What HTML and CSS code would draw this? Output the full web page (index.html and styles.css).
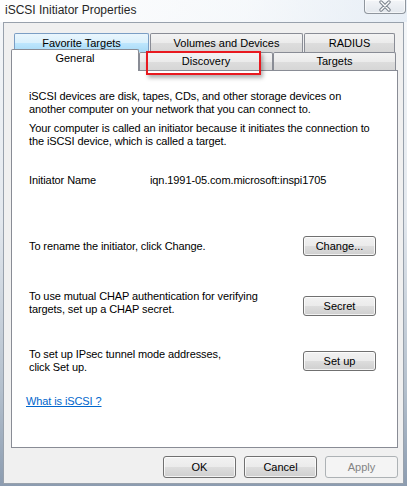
FILE: index.html
```html
<!DOCTYPE html>
<html>
<head>
<meta charset="utf-8">
<link rel="stylesheet" href="styles.css">
</head>
<body>
<div class="window">
  <div class="titlebar">
    <span class="title">iSCSI Initiator Properties</span>
    <div class="close">
      <svg width="18" height="12" viewBox="0 0 18 12">
        <path d="M5 2 L13 10 M13 2 L5 10" stroke="#7a828c" stroke-width="3.4" stroke-linecap="round" fill="none"/>
        <path d="M5 2 L13 10 M13 2 L5 10" stroke="#ffffff" stroke-width="1.4" stroke-linecap="round" fill="none"/>
      </svg>
    </div>
  </div>
  <div class="client">
    <div class="tabs">
      <div class="tabrow back">
        <div class="tab hover w-fav">Favorite Targets</div>
        <div class="tab w-vol">Volumes and Devices</div>
        <div class="tab w-rad">RADIUS</div>
      </div>
      <div class="tabrow front">
        <div class="tab selected w-gen">General</div>
        <div class="tab w-dis">Discovery</div>
        <div class="tab w-tgt">Targets</div>
      </div>
    </div>
    <div class="panel">
      <p class="p1">iSCSI devices are disk, tapes, CDs, and other storage devices on<br>another computer on your network that you can connect to.</p>
      <p class="p2">Your computer is called an initiator because it initiates the connection to<br>the iSCSI device, which is called a target.</p>
      <div class="name-row">
        <span class="label">Initiator Name</span>
        <span class="value">iqn.1991-05.com.microsoft:inspi1705</span>
      </div>
      <div class="row row-rename">
        <span>To rename the initiator, click Change.</span>
        <button class="btn">Change...</button>
      </div>
      <div class="row row-chap">
        <span>To use mutual CHAP authentication for verifying<br>targets, set up a CHAP secret.</span>
        <button class="btn btn-chap">Secret</button>
      </div>
      <div class="row row-ipsec">
        <span>To set up IPsec tunnel mode addresses,<br>click Set up.</span>
        <button class="btn btn-ipsec">Set up</button>
      </div>
      <a class="link" href="#">What is iSCSI ?</a>
    </div>
    <div class="footer">
      <button class="btn big">OK</button>
      <button class="btn big">Cancel</button>
      <button class="btn big disabled">Apply</button>
    </div>
  </div>
  <div class="redbox"></div>
</div>
</body>
</html>
```
FILE: styles.css
```css
* { box-sizing: border-box; }
html, body { margin: 0; padding: 0; }
body {
  width: 407px;
  height: 486px;
  overflow: hidden;
  font-family: "Liberation Sans", Arial, sans-serif;
  font-size: 11px;
  color: #000;
}
.window {
  position: relative;
  width: 407px;
  height: 486px;
  display: flex;
  flex-direction: column;
  background: linear-gradient(to bottom, #f6f8fa 0%, #e3e8ee 45%, #b4c0cd 80%, #8c9cb0 100%);
}
.titlebar {
  height: 22px;
  display: flex;
  justify-content: space-between;
  align-items: flex-start;
  background: linear-gradient(to right, rgba(255,255,255,0.9) 0%, rgba(246,249,252,0.6) 60%, rgba(225,234,244,0.7) 100%);
}
.title {
  padding: 3px 0 0 5px;
  font-size: 12px;
  line-height: 15px;
  color: #262626;
  text-shadow: 0 0 4px #ffffff;
}
.close {
  width: 42px;
  height: 14px;
  margin-right: 1px;
  border: 1px solid #8f969e;
  border-top: none;
  border-radius: 0 0 4px 4px;
  background: linear-gradient(to bottom, #f3f5f8, #e2e7ed);
  display: flex;
  align-items: center;
  justify-content: center;
  box-shadow: inset 0 0 0 1px rgba(255,255,255,0.6);
}
.close svg { display: block; margin-top: -1px; }
.client {
  flex: 1;
  margin: 0 3px 2px 3px;
  border: 1px solid #98a1ac;
  background: #f0f0f0;
  display: flex;
  flex-direction: column;
  padding: 10px 5px 5px 7px;
}
.tabs { display: flex; flex-direction: column; }
.tabrow { display: flex; }
.tabrow.back { height: 19px; padding-left: 3px; gap: 1px; }
.tabrow.front { height: 21px; margin-top: -3px; align-items: flex-end; }
.tab {
  border: 1px solid #898c95;
  border-bottom: none;
  border-radius: 2px 2px 0 0;
  background: linear-gradient(to bottom, #f3f3f3 0%, #ebebeb 50%, #dddddd 51%, #d6d6d6 100%);
  text-align: center;
  line-height: 14px;
  padding-top: 2px;
  height: 19px;
  white-space: nowrap;
}
.tab.hover {
  border-color: #7b9ec4;
  background: linear-gradient(to bottom, #eaf6fd 0%, #d9f0fc 50%, #bee6fd 51%, #a7d9f5 100%);
}
.front .tab { height: 18px; padding-top: 1px; }
.front .tab.selected {
  position: relative;
  z-index: 2;
  height: 22px;
  margin-bottom: -1px;
  background: #ffffff;
  padding-top: 1px;
}
.w-fav { width: 135px; }
.w-vol { width: 153px; }
.w-rad { width: 91px; }
.w-gen { width: 128px; }
.w-dis { width: 134px; }
.w-tgt { width: 123px; }
.panel {
  flex: 1;
  border: 1px solid #898c95;
  background: #ffffff;
  padding: 19px 21px 0 17px;
  display: flex;
  flex-direction: column;
  align-items: stretch;
  letter-spacing: -0.1px;
  white-space: nowrap;
}
.panel p { margin: 0; line-height: 13px; }
.p2 { margin-top: 6px !important; }
.name-row { margin-top: 26px; display: flex; line-height: 13px; }
.name-row .label { width: 121px; }
.row { display: flex; justify-content: space-between; line-height: 13px; }
.row-rename { margin-top: 49px; align-items: center; }
.row-chap { margin-top: 34px; align-items: flex-start; }
.row-ipsec { margin-top: 32px; align-items: flex-start; }
.btn-chap { margin-top: 6px; }
.btn-ipsec { margin-top: 3px; }
.btn {
  width: 73px;
  height: 20px;
  padding: 0;
  border: 1px solid #707070;
  border-radius: 3px;
  background: linear-gradient(to bottom, #f2f2f2 0%, #ebebeb 50%, #dddddd 51%, #cfcfcf 100%);
  box-shadow: inset 0 0 0 1px rgba(255,255,255,0.75);
  font-family: "Liberation Sans", Arial, sans-serif;
  font-size: 11px;
  letter-spacing: 0;
  color: #000;
  display: flex;
  align-items: center;
  justify-content: center;
  flex: none;
}
.btn.big { height: 22px; }
.btn.disabled {
  border-color: #adb2b5;
  background: #f4f4f4;
  color: #838383;
  box-shadow: none;
}
.link {
  margin-top: 21px;
  margin-left: -3px;
  align-self: flex-start;
  line-height: 13px;
  color: #0066cc;
  text-decoration: underline;
}
.footer {
  margin-top: 8px;
  display: flex;
  justify-content: flex-end;
  gap: 8px;
}
.redbox {
  position: absolute;
  left: 146px;
  top: 51px;
  width: 115px;
  height: 24px;
  border: 2px solid #e8191f;
  box-shadow: 2px 3px 4px rgba(0,0,0,0.3);
  z-index: 5;
}
```
